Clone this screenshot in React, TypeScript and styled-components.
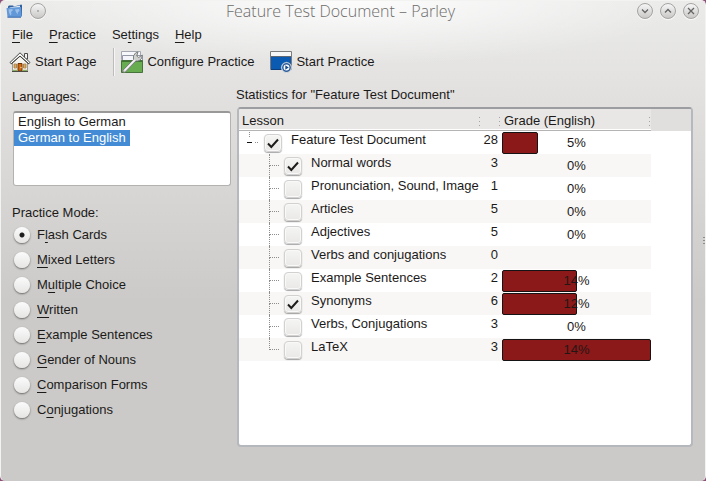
import React, { useState } from "react";
import styled, { createGlobalStyle } from "styled-components";

const GlobalStyle = createGlobalStyle`
  * { box-sizing: border-box; }
  body { margin: 0; background: #8d5078; }
  body, button, select, input {
    font-family: "Liberation Sans", Arial, sans-serif;
    font-size: 13px;
    line-height: 16px;
    color: #1c1a19;
  }
  u { text-decoration: underline; text-underline-offset: 3px; text-decoration-skip-ink: none; text-decoration-thickness: 1px; }
`;

const Window = styled.div`
  position: relative;
  display: flex;
  flex-direction: column;
  min-height: 100vh;
  border: 1px solid #f3f3f2;
  border-bottom: 0;
  border-radius: 5px;
  background:
    radial-gradient(ellipse 330px 64px at 50% 0, rgba(255, 255, 255, 0.85), rgba(255, 255, 255, 0)),
    linear-gradient(#ebebea 0, #e1e0df 100px, #cbcac8 300px);
`;

const TitleBar = styled.header`
  display: grid;
  grid-template-columns: 56px 1fr 80px;
  align-items: center;
  height: 20px;
  padding: 0 6px 0 5px;
`;

const Title = styled.h1`
  margin: 0;
  font-family: "Open Sans", "Noto Sans", sans-serif;
  font-size: 16px;
  font-weight: 300;
  line-height: 20px;
  color: #6d6c6b;
  text-align: center;
  white-space: nowrap;
`;

const TitleGroup = styled.div<{ $end?: boolean }>`
  display: flex;
  align-items: center;
  gap: 7px;
  justify-content: ${(p) => (p.$end ? "flex-end" : "flex-start")};
`;

const RoundButton = styled.button`
  display: grid;
  place-items: center;
  width: 16px;
  height: 16px;
  padding: 0;
  border: 1px solid #a5a4a3;
  border-radius: 50%;
  background: linear-gradient(#f6f6f6, #c9c8c7);
  box-shadow: 0 1px 1px rgba(255, 255, 255, 0.8);
`;

const MenuBar = styled.nav`
  display: flex;
  gap: 16px;
  padding: 6px 11px 0;
`;

const MenuButton = styled.button`
  padding: 0;
  border: 0;
  background: none;
`;

const ToolBar = styled.div`
  display: flex;
  align-items: center;
  height: 28px;
  margin-top: 5px;
  padding-left: 8px;
`;

const ToolButton = styled.button`
  display: flex;
  align-items: center;
  gap: 4px;
  padding: 0;
  border: 0;
  background: none;
  white-space: nowrap;
`;

const ToolSeparator = styled.span`
  width: 2px;
  height: 28px;
  margin: 0 6px 0 17px;
  border-left: 1px solid #bdbcbb;
  border-right: 1px solid #f6f6f6;
`;

const ToolSpacer = styled.span`
  width: 16px;
`;

const Content = styled.main`
  display: grid;
  grid-template-columns: 218px minmax(0, 1fr);
  gap: 6px;
  flex: 1;
  padding: 11px 12px 34px 12px;
`;

const Sidebar = styled.aside`
  display: flex;
  flex-direction: column;
  padding-top: 2px;
`;

const FieldLabel = styled.label`
  margin-bottom: 6px;
  margin-left: -1px;
`;

const LanguageList = styled.select`
  height: 75px;
  padding: 1px 0;
  border: 1px solid #b3b2b1;
  border-top: 2px solid #9a9999;
  border-radius: 3px;
  outline: 0;
  background: #fff;
  overflow: hidden;
`;

const LanguageOption = styled.option`
  width: fit-content;
  min-height: 16px;
  padding: 0 4px;
  line-height: 16px;
  &:checked {
    background: #438bd5 linear-gradient(#438bd5, #438bd5);
    color: #fff;
  }
`;

const ModeGroup = styled.fieldset`
  display: flex;
  flex-direction: column;
  gap: 9px;
  margin: 19px 0 0 -1px;
  padding: 0;
  border: 0;
`;

const ModeLegend = styled.legend`
  margin-bottom: 6px;
  padding: 0;
`;

const ModeLabel = styled.label`
  display: flex;
  align-items: center;
  gap: 7px;
  padding-left: 2px;
`;

const Radio = styled.input`
  appearance: none;
  width: 16px;
  height: 16px;
  margin: 0;
  border-radius: 50%;
  background: linear-gradient(#fbfbfb, #e6e5e4);
  box-shadow: 0 1px 2px rgba(0, 0, 0, 0.5);
  &:checked {
    background: radial-gradient(circle, #1e1e1e 2px, transparent 3px), linear-gradient(#fbfbfb, #e6e5e4);
  }
`;

const Statistics = styled.section`
  display: flex;
  flex-direction: column;
`;

const StatisticsTitle = styled.h2`
  margin: 0 0 4px -1px;
  font-size: 13px;
  font-weight: 400;
  line-height: 16px;
`;

const TreePanel = styled.div`
  flex: 1;
  border: 2px solid #b5b8bc;
  border-top-color: #9b9da1;
  border-radius: 4px;
  background: #fff;
  overflow: hidden;
`;

const Tree = styled.table`
  width: 100%;
  table-layout: fixed;
  border-collapse: collapse;
`;

const CountCol = styled.col`
  width: 20px;
`;
const GradeCol = styled.col`
  width: 150px;
`;
const RestCol = styled.col`
  width: 40px;
`;

const HeadCell = styled.th<{ $rest?: boolean }>`
  height: 22px;
  padding: 0;
  font-weight: 400;
  text-align: left;
  background: ${(p) => (p.$rest ? "#e0dfde" : "#e8e7e5")};
  box-shadow: ${(p) => (p.$rest ? "none" : "inset 0 -1px #b5b4b3, inset 0 -2px #fff")};
`;

const HeadContent = styled.div`
  display: flex;
  align-items: center;
  justify-content: space-between;
  padding: 2px 1px 0 3px;
`;

const Handle = styled.span`
  width: 1px;
  height: 9px;
  margin-left: auto;
  background: repeating-linear-gradient(#a5a4a3 0 1px, transparent 1px 4px);
`;

const Row = styled.tr<{ $odd: boolean }>`
  & > td {
    height: 23px;
    padding: 0;
    background: ${(p) => (p.$odd ? "#f8f7f6" : "#fff")};
    vertical-align: top;
  }
  & > td:last-child {
    background: #fff;
  }
`;

const LessonLabel = styled.label`
  display: flex;
  height: 23px;
  white-space: nowrap;
`;

const LessonName = styled.span`
  padding: 1px 0 0 9px;
`;

const Branch = styled.span<{ $last: boolean }>`
  display: grid;
  grid-template-rows: 12px 11px;
  width: 10px;
  margin: 0 5px 0 30px;
  &::before {
    content: "";
    border-left: 1px dotted #8e8d8c;
    border-bottom: 1px dotted #8e8d8c;
  }
  &::after {
    content: "";
    border-left: ${(p) => (p.$last ? "0" : "1px dotted #8e8d8c")};
  }
`;

const Expander = styled.svg`
  width: 25px;
  height: 23px;
`;

const CheckFrame = styled.span`
  display: grid;
  place-items: center;
  width: 18px;
  height: 18px;
  margin-top: 3px;
  & > * {
    grid-area: 1 / 1;
  }
  & > svg {
    pointer-events: none;
  }
`;

const CheckBox = styled.input`
  appearance: none;
  width: 18px;
  height: 18px;
  margin: 0;
  border: 1px solid #d2d1d0;
  border-radius: 4px;
  background: linear-gradient(#f5f5f4, #e9e8e7);
  box-shadow: 0 1px 1px rgba(0, 0, 0, 0.35), inset 0 0 0 1px #f9f9f9;
`;

const Count = styled.div`
  padding: 1px 3px 0 0;
  text-align: right;
`;

const Grade = styled.div`
  display: grid;
  align-items: center;
  height: 23px;
  padding: 1px 0 0 1px;
  & > * {
    grid-area: 1 / 1;
  }
`;

const Bar = styled.span`
  height: 22px;
  border: 1px solid #151313;
  border-radius: 2px;
  background: #8b1919;
`;

const Percent = styled.span`
  text-align: center;
  color: #231716;
`;

const EdgeGrip = styled.span`
  position: absolute;
  top: 236px;
  right: 0;
  width: 2px;
  height: 9px;
  background: repeating-linear-gradient(#8d8c8b 0 1px, transparent 1px 3px);
`;

const FolderIcon = () => (
  <svg width="17" height="14" viewBox="0 0 17 14" aria-hidden="true">
    <path d="M2 4V2.500L3 1.500h4l1 1 7.500-2 .5 1V12H3z" fill="#2f5f9f" />
    <path d="M3.500 3.500 14 1.500v3l-10 1z" fill="#dfe8f2" />
    <path d="M.5 4 15 3l.8 9.500-1 .8H1.500z" fill="#6398d8" />
    <path d="m2.500 5.500 3.500-.5 1 1-2 2 .5 2-1 1.500-1.500-3zM9 5.500l4-.5.5 2-1.500 1-.5 2.500-1.500-2.500z" fill="#9bc0ea" />
    <path d="M1.500 13.200h13.500" stroke="#3a6aad" />
  </svg>
);

const HouseIcon = () => (
  <svg width="22" height="22" viewBox="0 0 22 22" aria-hidden="true">
    <path d="M15.500 2.500h3V8h-3z" fill="#f4f4f2" stroke="#4a4a48" />
    <path d="M3.500 11 11 4l7.500 7v9.500h-15z" fill="#f5f3ee" stroke="#8a867e" strokeWidth=".8" />
    <path d="M1 11.500 11 1.800l10 9.700-1.200 1.300L11 5l-8.800 7.800z" fill="#fbfbfb" stroke="#33332f" strokeWidth=".9" />
    <path d="M2.500 12.800 11 5.200l8.500 7.600" fill="none" stroke="#45443f" strokeWidth=".9" />
    <path d="M9 12.500h4v7.500H9z" fill="#d3690f" stroke="#6e350b" />
    <path d="M5 13h2.500v4H5zM14.500 13H17v4h-2.500z" fill="#f3c474" stroke="#9c7338" strokeWidth=".8" />
    <path d="M5 15h2.500M14.500 15H17" stroke="#9c7338" strokeWidth=".6" />
    <circle cx="12" cy="16.500" r=".7" fill="#ffe59c" />
    <path d="M3 20.500h16" stroke="#4d4d43" />
    <path d="M4 19.300h4m6 0h4" stroke="#6aa03a" />
  </svg>
);

const ConfigureIcon = () => (
  <svg width="22" height="22" viewBox="0 0 22 22" aria-hidden="true">
    <path d="M.5 .5h19v8H.500z" fill="#f7f8fc" stroke="#a3a8b0" />
    <path d="M1.500 4.500h20v8h-20z" fill="#f3f5fb" stroke="#9499a8" />
    <path d="M.5 9.500h21v12H.500z" fill="#67ad50" stroke="#46733a" />
    <path d="M1 10.500h20" stroke="#3e7430" />
    <path d="M2 19.200 12.500 8.500q-1-4 2-6.500L17 1l-1.300 4 2 1.500L21.300 4q.2 4-3 5.500-1.800.8-3.300.5L4.500 21q-1.500 1-2.500-.2-.6-.8 0-1.600z" fill="#cfd0cf" stroke="#747876" strokeWidth=".9" />
    <path d="m3.500 19.500 10.200-10.500" fill="none" stroke="#f5f5f5" strokeWidth="1.300" />
  </svg>
);

const StartIcon = () => (
  <svg width="22" height="22" viewBox="0 0 22 22" aria-hidden="true">
    <path d="M.5 .5h21v18H.500z" fill="#f7f7f7" stroke="#7c7c7c" />
    <path d="M1 6h20v12.500H1z" fill="#0c5bb3" />
    <path d="M1 5.500h20" stroke="#5d6874" />
    <path d="M1 18.500h20" stroke="#0b3e7c" />
    <circle cx="16.500" cy="16.500" r="5.200" fill="#f7f9fb" stroke="#b6bdc5" strokeWidth=".6" />
    <circle cx="16.500" cy="16.500" r="3.700" fill="#fff" stroke="#2c5c99" strokeWidth="1.500" />
    <path d="m15.300 14.300 3.500 2.200-3.500 2.200z" fill="#174b8c" />
  </svg>
);

const Tick = () => (
  <svg width="14" height="14" viewBox="0 0 14 14" aria-hidden="true">
    <path d="m2 7.500 3.300 3.500L12 3.500" fill="none" stroke="#1d1c1b" strokeWidth="2" />
  </svg>
);

const Glyph = ({ d }: { d: string }) => (
  <svg width="10" height="10" viewBox="0 0 10 10" aria-hidden="true">
    <path d={d} fill="none" stroke="#656463" strokeWidth="1.300" />
  </svg>
);

type Mnemonic = [string, string, string];

const menus: Mnemonic[] = [
  ["", "F", "ile"],
  ["", "P", "ractice"],
  ["Se", "t", "tings"],
  ["", "H", "elp"],
];

const modes: Mnemonic[] = [
  ["F", "l", "ash Cards"],
  ["", "M", "ixed Letters"],
  ["M", "u", "ltiple Choice"],
  ["", "W", "ritten"],
  ["", "E", "xample Sentences"],
  ["", "G", "ender of Nouns"],
  ["", "C", "omparison Forms"],
  ["C", "o", "njugations"],
];

const lessons = [
  { name: "Feature Test Document", checked: true, count: 28, grade: "5%", bar: 24 },
  { name: "Normal words", checked: true, count: 3, grade: "0%", bar: 0 },
  { name: "Pronunciation, Sound, Image", checked: false, count: 1, grade: "0%", bar: 0 },
  { name: "Articles", checked: false, count: 5, grade: "0%", bar: 0 },
  { name: "Adjectives", checked: false, count: 5, grade: "0%", bar: 0 },
  { name: "Verbs and conjugations", checked: false, count: 0, grade: "", bar: 0 },
  { name: "Example Sentences", checked: false, count: 2, grade: "14%", bar: 50 },
  { name: "Synonyms", checked: true, count: 6, grade: "12%", bar: 50 },
  { name: "Verbs, Conjugations", checked: false, count: 3, grade: "0%", bar: 0 },
  { name: "LaTeX", checked: false, count: 3, grade: "14%", bar: 100 },
];

const MnemonicText = ({ text }: { text: Mnemonic }) => (
  <span>
    {text[0]}
    <u>{text[1]}</u>
    {text[2]}
  </span>
);

export default function App() {
  const [mode, setMode] = useState(0);
  const [checked, setChecked] = useState(lessons.map((l) => l.checked));
  const toggle = (i: number) => setChecked(checked.map((c, n) => (n === i ? !c : c)));

  return (
    <Window>
      <GlobalStyle />
      <TitleBar>
        <TitleGroup>
          <FolderIcon />
          <RoundButton aria-label="Sticky">
            <svg width="4" height="4" viewBox="0 0 4 4" aria-hidden="true">
              <circle cx="2" cy="2" r="1" fill="#a4a3a2" />
            </svg>
          </RoundButton>
        </TitleGroup>
        <Title>Feature Test Document – Parley</Title>
        <TitleGroup $end>
          <RoundButton aria-label="Minimize">
            <Glyph d="m2 3.500 3 3 3-3" />
          </RoundButton>
          <RoundButton aria-label="Maximize">
            <Glyph d="m2 6.500 3-3 3 3" />
          </RoundButton>
          <RoundButton aria-label="Close">
            <Glyph d="m2 2 6 6M8 2 2 8" />
          </RoundButton>
        </TitleGroup>
      </TitleBar>
      <MenuBar>
        {menus.map((m) => (
          <MenuButton key={m.join("")}>
            <MnemonicText text={m} />
          </MenuButton>
        ))}
      </MenuBar>
      <ToolBar>
        <ToolButton>
          <HouseIcon />
          Start Page
        </ToolButton>
        <ToolSeparator />
        <ToolButton>
          <ConfigureIcon />
          Configure Practice
        </ToolButton>
        <ToolSpacer />
        <ToolButton>
          <StartIcon />
          Start Practice
        </ToolButton>
      </ToolBar>
      <Content>
        <Sidebar>
          <FieldLabel htmlFor="languages">Languages:</FieldLabel>
          <LanguageList id="languages" size={4} defaultValue="de-en">
            <LanguageOption value="en-de">English to German</LanguageOption>
            <LanguageOption value="de-en">German to English</LanguageOption>
          </LanguageList>
          <ModeGroup>
            <ModeLegend>Practice Mode:</ModeLegend>
            {modes.map((m, i) => (
              <ModeLabel key={m.join("")}>
                <Radio type="radio" name="mode" checked={mode === i} onChange={() => setMode(i)} />
                <MnemonicText text={m} />
              </ModeLabel>
            ))}
          </ModeGroup>
        </Sidebar>
        <Statistics>
          <StatisticsTitle>Statistics for "Feature Test Document"</StatisticsTitle>
          <TreePanel>
            <Tree>
              <colgroup>
                <col />
                <CountCol />
                <GradeCol />
                <RestCol />
              </colgroup>
              <thead>
                <tr>
                  <HeadCell>
                    <HeadContent>
                      Lesson
                      <Handle />
                    </HeadContent>
                  </HeadCell>
                  <HeadCell>
                    <HeadContent>
                      <Handle />
                    </HeadContent>
                  </HeadCell>
                  <HeadCell>
                    <HeadContent>
                      Grade (English)
                      <Handle />
                    </HeadContent>
                  </HeadCell>
                  <HeadCell $rest />
                </tr>
              </thead>
              <tbody>
                {lessons.map((l, i) => (
                  <Row key={l.name} $odd={i % 2 === 1}>
                    <td>
                      <LessonLabel>
                        {i === 0 ? (
                          <Expander viewBox="0 0 25 23" aria-hidden="true">
                            <path d="M10.500 1v6" stroke="#8e8d8c" strokeDasharray="1 1" />
                            <path d="M8 11.500h5" stroke="#111" />
                            <path d="M16 11.500h4" stroke="#8e8d8c" strokeDasharray="1 1" />
                          </Expander>
                        ) : (
                          <Branch $last={i === lessons.length - 1} />
                        )}
                        <CheckFrame>
                          <CheckBox type="checkbox" checked={checked[i]} onChange={() => toggle(i)} />
                          {checked[i] && <Tick />}
                        </CheckFrame>
                        <LessonName>{l.name}</LessonName>
                      </LessonLabel>
                    </td>
                    <td>
                      <Count>{l.count}</Count>
                    </td>
                    <td>
                      <Grade>
                        {l.bar > 0 && <Bar style={{ width: `${l.bar}%` }} />}
                        <Percent>{l.grade}</Percent>
                      </Grade>
                    </td>
                    <td />
                  </Row>
                ))}
              </tbody>
            </Tree>
          </TreePanel>
        </Statistics>
      </Content>
      <EdgeGrip />
    </Window>
  );
}
